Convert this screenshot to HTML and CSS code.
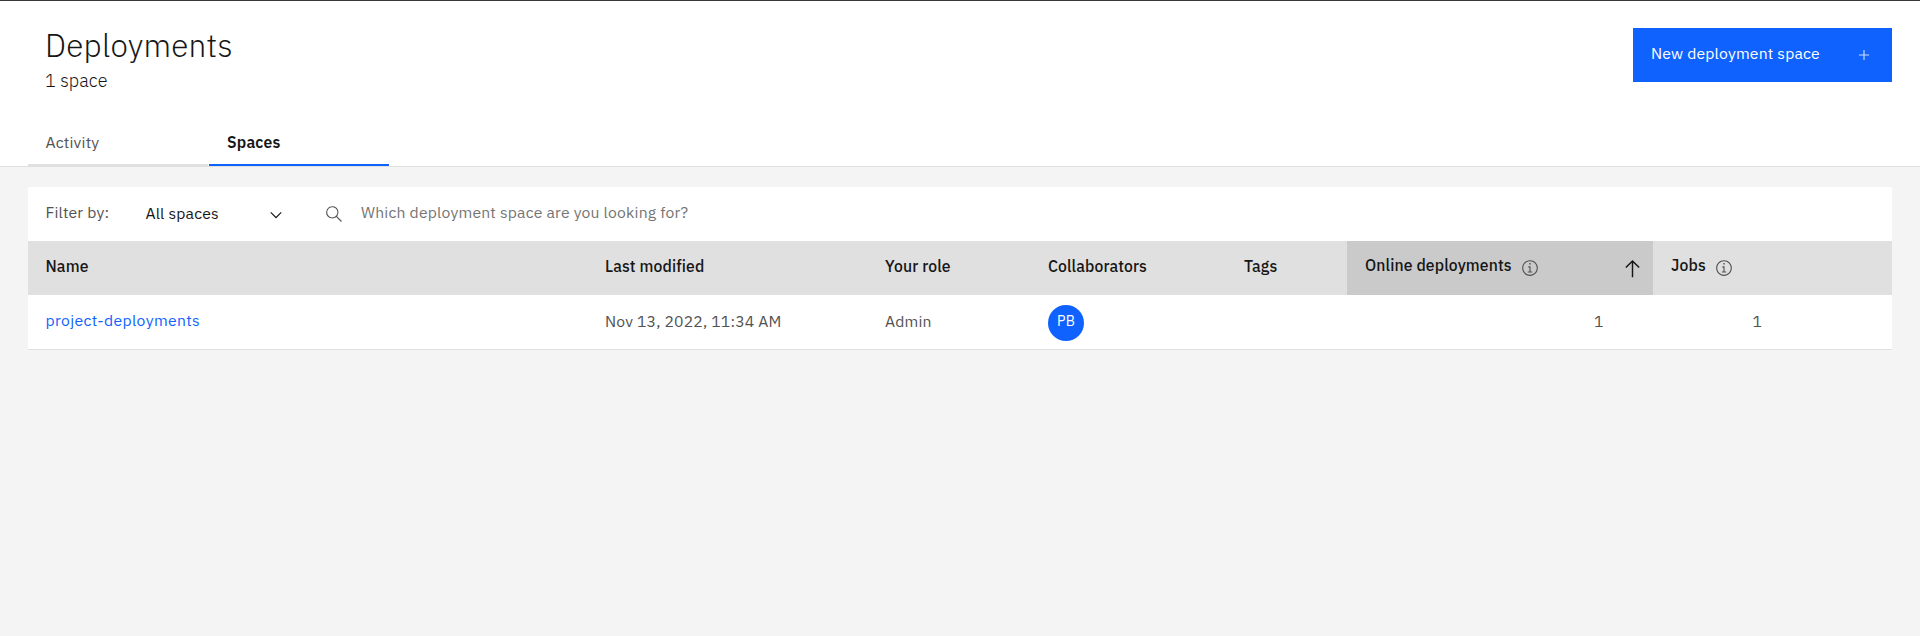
FILE: index.html
```html
<!DOCTYPE html>
<html lang="en">
<head>
<meta charset="utf-8">
<title>Deployments</title>
<link rel="stylesheet" href="styles.css">
</head>
<body>
<header class="page-header">
  <div class="header-top">
    <div class="heading">
      <h1 class="title">Deployments</h1>
      <p class="subtitle">1 space</p>
    </div>
    <button class="primary-button" type="button">
      <span>New deployment space</span>
      <svg class="plus-icon" viewBox="0 0 18 18"><path d="M9 4v10M4 9h10"/></svg>
    </button>
  </div>
  <nav class="tabs">
    <a class="tab">Activity</a>
    <a class="tab tab-selected">Spaces</a>
  </nav>
</header>
<main class="content">
  <div class="toolbar">
    <span class="filter-label">Filter by:</span>
    <div class="dropdown">
      <span>All spaces</span>
      <svg class="chevron-icon" viewBox="0 0 16 16"><path d="M8 11L3 6l.7-.7L8 9.6l4.3-4.3.7.7z"/></svg>
    </div>
    <div class="search">
      <svg class="search-icon" viewBox="0 0 16 16"><path d="M15 14.3L10.7 10c1.9-2.3 1.6-5.8-.7-7.7S4.2.7 2.3 3 .7 8.8 3 10.7c2 1.7 5 1.7 7 0l4.3 4.3.7-.7zM2 6.5C2 4 4 2 6.5 2S11 4 11 6.5 9 11 6.5 11 2 9 2 6.5z"/></svg>
      <span class="placeholder">Which deployment space are you looking for?</span>
    </div>
  </div>
  <div class="row row-head">
    <div class="cell">Name</div>
    <div class="cell">Last modified</div>
    <div class="cell">Your role</div>
    <div class="cell">Collaborators</div>
    <div class="cell">Tags</div>
    <div class="cell cell-info cell-sorted">
      <span>Online deployments</span>
      <svg class="info-icon" viewBox="0 0 16 16"><path d="M8.5 11V6.5h-2v1h1V11H6v1h4v-1zM8 3.5c-.4 0-.8.3-.8.8s.4.7.8.7.8-.3.8-.8-.4-.7-.8-.7z"/><path d="M8 15c-3.9 0-7-3.1-7-7s3.1-7 7-7 7 3.1 7 7-3.1 7-7 7zM8 2C4.7 2 2 4.7 2 8s2.7 6 6 6 6-2.7 6-6-2.7-6-6-6z"/></svg>
      <svg class="sort-icon" viewBox="0 0 32 32"><path d="M16 4L6 14l1.41 1.41L15 7.83V28h2V7.83l7.59 7.58L26 14 16 4z"/></svg>
    </div>
    <div class="cell cell-info">
      <span>Jobs</span>
      <svg class="info-icon" viewBox="0 0 16 16"><path d="M8.5 11V6.5h-2v1h1V11H6v1h4v-1zM8 3.5c-.4 0-.8.3-.8.8s.4.7.8.7.8-.3.8-.8-.4-.7-.8-.7z"/><path d="M8 15c-3.9 0-7-3.1-7-7s3.1-7 7-7 7 3.1 7 7-3.1 7-7 7zM8 2C4.7 2 2 4.7 2 8s2.7 6 6 6 6-2.7 6-6-2.7-6-6-6z"/></svg>
    </div>
  </div>
  <div class="row row-body">
    <div class="cell cell-link"><a class="link">project-deployments</a></div>
    <div class="cell">Nov 13, 2022, 11:34 AM</div>
    <div class="cell">Admin</div>
    <div class="cell cell-avatar"><span class="avatar">PB</span></div>
    <div class="cell"></div>
    <div class="cell cell-number">1</div>
    <div class="cell cell-number cell-jobs">1</div>
  </div>
</main>
</body>
</html>
```
FILE: styles.css
```css
* { box-sizing: border-box; }

body {
  margin: 0;
  min-height: 636px;
  background: #f4f4f4;
  color: #161616;
  font: 400 15.75px/20px "IBM Plex Sans", Roboto, sans-serif;
  letter-spacing: 0.16px;
}

svg { display: block; flex: none; }

.page-header {
  display: flex;
  flex-direction: column;
  justify-content: space-between;
  height: 167px;
  padding: 0 28px;
  background: #fff;
  border-top: 1px solid #393939;
  border-bottom: 1px solid #e0e0e0;
}

.header-top {
  display: flex;
  justify-content: space-between;
  align-items: flex-start;
}

.heading { padding: 25px 0 0 17px; }

.title {
  margin: 0;
  font-size: 31.5px;
  line-height: 40px;
  font-weight: 300;
  letter-spacing: 0.25px;
}

.subtitle {
  margin: 3px 0 0;
  font-size: 18px;
  line-height: 24px;
  font-weight: 300;
  letter-spacing: 0.08px;
}

.primary-button {
  display: flex;
  justify-content: space-between;
  align-items: flex-start;
  width: 259px;
  height: 54px;
  margin-top: 27px;
  padding: 15px 19px 0 18px;
  border: 0;
  background: #0f62fe;
  color: #fff;
  font: inherit;
  letter-spacing: inherit;
}

.plus-icon {
  width: 18px;
  height: 18px;
  margin-top: 3px;
  fill: none;
  stroke: #fff;
  stroke-opacity: 0.8;
  stroke-width: 1.125;
}

.tabs { display: flex; gap: 1px; }

.tab {
  width: 180px;
  padding: 0 17.5px 12px;
  border-bottom: 2px solid #e0e0e0;
  color: #525252;
}

.tab-selected {
  padding-left: 18px;
  border-color: #0f62fe;
  color: #161616;
  font-weight: 600;
}

.content { padding: 20px 28px 0; }

.toolbar {
  display: flex;
  height: 54px;
  padding: 15px 17.5px 0;
  background: #fff;
}

.filter-label { width: 100px; color: #525252; }

.dropdown {
  display: flex;
  justify-content: space-between;
  width: 139.5px;
  padding-top: 1px;
}

.chevron-icon { width: 18px; height: 18px; margin-top: 3px; fill: #161616; }

.search { display: flex; gap: 18px; margin-left: 40px; }

.search-icon { width: 18px; height: 18px; margin-top: 3px; fill: #525252; }

.placeholder { color: #757575; letter-spacing: 0.18px; }

.row {
  display: grid;
  grid-template-columns: 560px 280px 163px 196px 120px 306px 1fr;
}

.row-head {
  height: 54px;
  background: #e0e0e0;
  font-weight: 500;
  letter-spacing: 0.12px;
}

.row-body {
  height: 55px;
  background: #fff;
  border-bottom: 1px solid #e0e0e0;
  color: #525252;
}

.cell { padding: 16px 18px 0 17px; }

.row-head .cell { padding-top: 15px; }

.cell:first-child { padding-left: 17.5px; }

.row-head .cell-info { display: flex; padding: 14px 18px 0; }

.cell-sorted { background: #cacaca; }

.info-icon { width: 18px; height: 18px; margin: 4px 0 0 9px; fill: #525252; }

.sort-icon { width: 23px; height: 23px; margin: 2px -9px 0 auto; fill: #161616; }

.row-body .cell-link { padding-top: 15px; }

.link { color: #0f62fe; letter-spacing: 0.34px; }

.row-body .cell-avatar { padding-top: 10px; }

.avatar {
  display: flex;
  justify-content: center;
  width: 36px;
  height: 36px;
  padding-top: 6px;
  border-radius: 50%;
  background: #0f62fe;
  color: #fff;
  font-size: 14px;
}

.row-body .cell-number { padding-right: 49.5px; text-align: right; }

.row-body .cell-jobs { padding-right: 130px; }
```
